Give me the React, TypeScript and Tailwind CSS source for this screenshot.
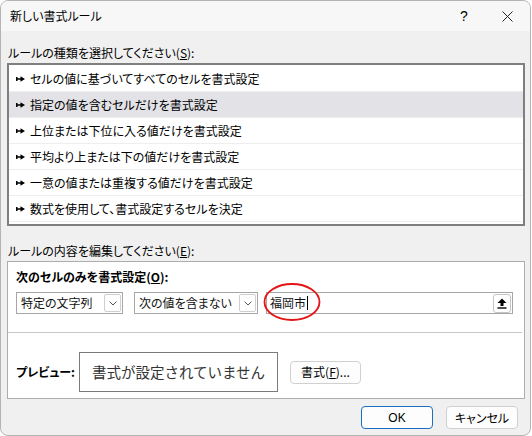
import React from "react";

const items = [
  "セルの値に基づいてすべてのセルを書式設定",
  "指定の値を含むセルだけを書式設定",
  "上位または下位に入る値だけを書式設定",
  "平均より上または下の値だけを書式設定",
  "一意の値または重複する値だけを書式設定",
  "数式を使用して、書式設定するセルを決定",
];

function Arrow() {
  return (
    <svg width="9" height="6" viewBox="0 0 9 6" className="shrink-0">
      <path d="M0 1 H1.5 V2.2 H4.5 V0.3 L9 3 L4.5 5.7 V3.8 H1.5 V5 H0 Z" fill="#000" />
    </svg>
  );
}

function Chevron() {
  return (
    <svg width="8" height="5" viewBox="0 0 8 5">
      <path d="M0.5 0.5 L4 4 L7.5 0.5" fill="none" stroke="#555" strokeWidth="1" />
    </svg>
  );
}

function Combo({ w, text }: { w: string; text: string }) {
  return (
    <div className={`${w} h-[22px] border border-[#a6a6a6] bg-white flex items-center pl-[4px] pr-[1px]`}>
      <span className="flex-1 leading-[16px] text-[#111]">{text}</span>
      <div className="w-[17px] h-[18px] border border-[#cfcfcf] rounded-[2px] bg-white flex items-center justify-center">
        <Chevron />
      </div>
    </div>
  );
}

export default function App() {
  return (
    <div className="w-[532px] h-[436px] bg-white overflow-hidden">
      <div className="w-[531px] h-[436px] rounded-[8px] border border-[#b4b4b4] bg-[#f0f0f0] overflow-hidden flex flex-col font-['Noto_Sans_CJK_JP','Noto_Sans',sans-serif] text-[12px] text-black [font-feature-settings:'palt']">
        {/* title bar */}
        <div className="h-[30px] bg-[#f7f7f7] flex items-center shrink-0">
          <span className="pl-[9px] leading-[16px]">新しい書式ルール</span>
          <div className="ml-auto flex items-center h-full">
            <div className="w-[40px] h-full flex items-center justify-center text-[14px] font-['Liberation_Sans',sans-serif]">?</div>
            <div className="w-[46px] h-full flex items-center justify-center">
              <svg width="11" height="11" viewBox="0 0 11 11">
                <path d="M0.5 0.5 L10.5 10.5 M10.5 0.5 L0.5 10.5" stroke="#222" strokeWidth="1" />
              </svg>
            </div>
          </div>
        </div>

        {/* body */}
        <div className="flex flex-col pl-[6px]">
          <div className="mt-[14px] leading-[16px] pl-[1px]">
            ルールの種類を選択してください(<span className="underline">S</span>):
          </div>
          <div className="mt-[2px] w-[518px] h-[163px] border-2 border-[#7f7f7f] bg-white pt-[1px] flex flex-col">
            {items.map((t, i) => (
              <div
                key={i}
                className={`h-[26px] shrink-0 flex items-center pl-[7px] border-b border-[#eeeeee] ${
                  i === 1 ? "bg-[#e2e2e7]" : ""
                }`}
              >
                <Arrow />
                <span className="ml-[5px] leading-[16px]">{t}</span>
              </div>
            ))}
          </div>

          <div className="mt-[17px] leading-[16px] pl-[1px]">
            ルールの内容を編集してください(<span className="underline">E</span>):
          </div>
          <div className="mt-[2px] w-[518px] h-[138px] border border-[#adadad] bg-white flex flex-col">
            <div className="pl-[8px] pt-[7px] leading-[16px] font-bold">
              次のセルのみを書式設定(<span className="underline">O</span>):
            </div>
            <div className="pl-[8px] mt-[7px] flex items-center">
              <Combo w="w-[107px]" text="特定の文字列" />
              <div className="ml-[11px]">
                <Combo w="w-[124px]" text="次の値を含まない" />
              </div>
              <div className="ml-[8px] relative w-[247px] h-[22px] border border-[#a6a6a6] bg-white flex items-center pl-[3px] pr-[1px]">
                <span className="leading-[16px] text-[#111]">福岡市</span>
                <span className="w-px h-[14px] bg-black ml-[1px]" />
                <div className="ml-auto w-[18px] h-[19px] border border-[#c4c4c4] rounded-[3px] bg-white flex items-center justify-center">
                  <svg width="10" height="11" viewBox="0 0 10 11">
                    <path d="M5 0.5 L9.5 5 H6.5 V8 H3.5 V5 H0.5 Z" fill="#000" />
                    <rect x="0.5" y="9.3" width="9" height="1.4" fill="#000" />
                  </svg>
                </div>
                <svg
                  className="absolute left-[-4px] top-[-11px] pointer-events-none"
                  width="58"
                  height="40"
                  viewBox="0 0 58 40"
                >
                  <ellipse cx="29" cy="20" rx="27.5" ry="18" fill="none" stroke="#e51414" strokeWidth="1.8" />
                </svg>
              </div>
            </div>
            <div className="mt-[18px] h-px bg-[#c6c6c6] mr-[2px]" />
            <div className="mt-[19px] pl-[8px] flex items-center">
              <span className="w-[63px] leading-[16px] font-bold">プレビュー:</span>
              <div className="w-[199px] h-[40px] border border-[#7a7a7a] bg-white flex items-center justify-center text-[14.5px] text-[#333] [font-feature-settings:normal]">
                書式が設定されていません
              </div>
              <button className="ml-[12px] w-[71px] h-[23px] border border-[#d0d0d0] rounded-[4px] bg-[#fdfdfd] leading-[16px] text-[12px] flex items-center justify-center">
                書式(<span className="underline">F</span>)...
              </button>
            </div>
          </div>

          <div className="mt-[7px] flex justify-end pr-[12px] gap-[13px]">
            <button className="w-[72px] h-[23px] border border-[#1a6fc4] rounded-[4px] bg-[#fdfdfd] flex items-center justify-center leading-[16px] font-['Liberation_Sans',sans-serif]">
              OK
            </button>
            <button className="w-[72px] h-[23px] border border-[#d0d0d0] rounded-[4px] bg-[#fdfdfd] flex items-center justify-center leading-[16px]">
              キャンセル
            </button>
          </div>
        </div>
      </div>
    </div>
  );
}
